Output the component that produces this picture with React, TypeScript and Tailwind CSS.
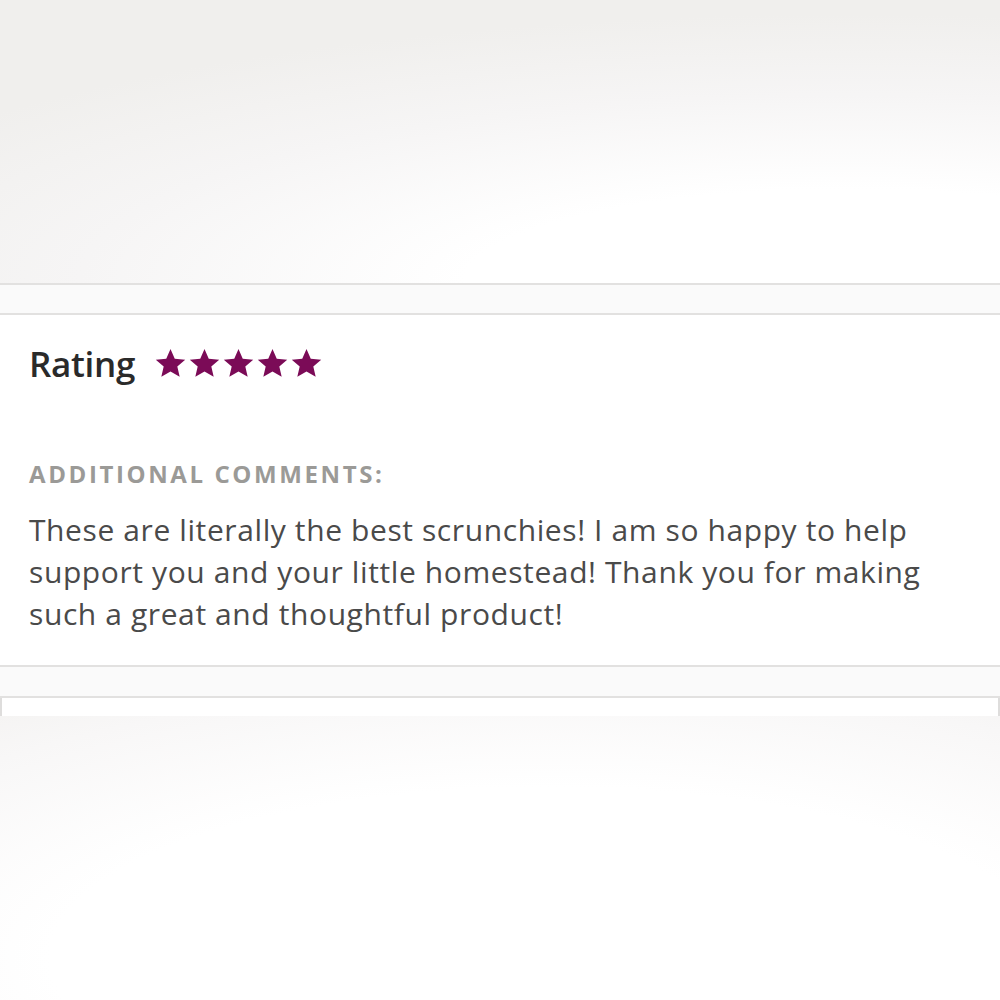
function Star() {
  return (
    <svg viewBox="0 0 24 24" className="h-[33px] w-[33px]" aria-hidden="true">
      <path
        d="M12 1.5l3.1 7 7.6.7-5.75 5.05 1.72 7.45L12 17.8l-6.67 3.9 1.72-7.45L1.3 9.2l7.6-.7z"
        fill="#7b0b57"
      />
    </svg>
  );
}

export default function App() {
  return (
    <main className="flex h-[1000px] w-[1000px] flex-col overflow-hidden bg-white font-['Open_Sans','Lato',sans-serif]">
      <div className="h-[283px] shrink-0 bg-[radial-gradient(ellipse_110%_95%_at_85%_100%,#ffffff_35%,#f6f5f5_70%,#f0efed_100%)]" />

      <div className="h-[32px] shrink-0 border-y-2 border-[#e2e1e0] bg-[#fafafa]" />

      <section className="flex h-[350px] shrink-0 flex-col bg-white px-[29px]">
        <div className="mt-[31px] flex items-center gap-[19px]">
          <h2 className="text-[35px] font-semibold leading-none tracking-[-0.3px] text-[#2a2a2a]">Rating</h2>
          <div className="flex items-center gap-[1px]">
            <Star />
            <Star />
            <Star />
            <Star />
            <Star />
          </div>
        </div>

        <p className="mt-[81px] text-[24px] font-bold uppercase leading-none tracking-[2.6px] text-[#9b9a97]">
          Additional Comments:
        </p>

        <p className="mt-[23px] max-w-[910px] text-[30px] leading-[42px] tracking-[0.6px] text-[#4a4a4a]">
          These are literally the best scrunchies! I am so happy to help support you and your little homestead! Thank
          you for making such a great and thoughtful product!
        </p>
      </section>

      <div className="h-[33px] shrink-0 border-y-2 border-[#e2e1e0] bg-[#fafafa]" />

      <div className="h-[18px] shrink-0 border-x-2 border-[#dedddc] bg-white" />

      <div className="flex-1 bg-[radial-gradient(ellipse_100%_120%_at_55%_85%,#ffffff_50%,#f8f7f7_80%,#f2f1ef_100%)]" />
    </main>
  );
}
